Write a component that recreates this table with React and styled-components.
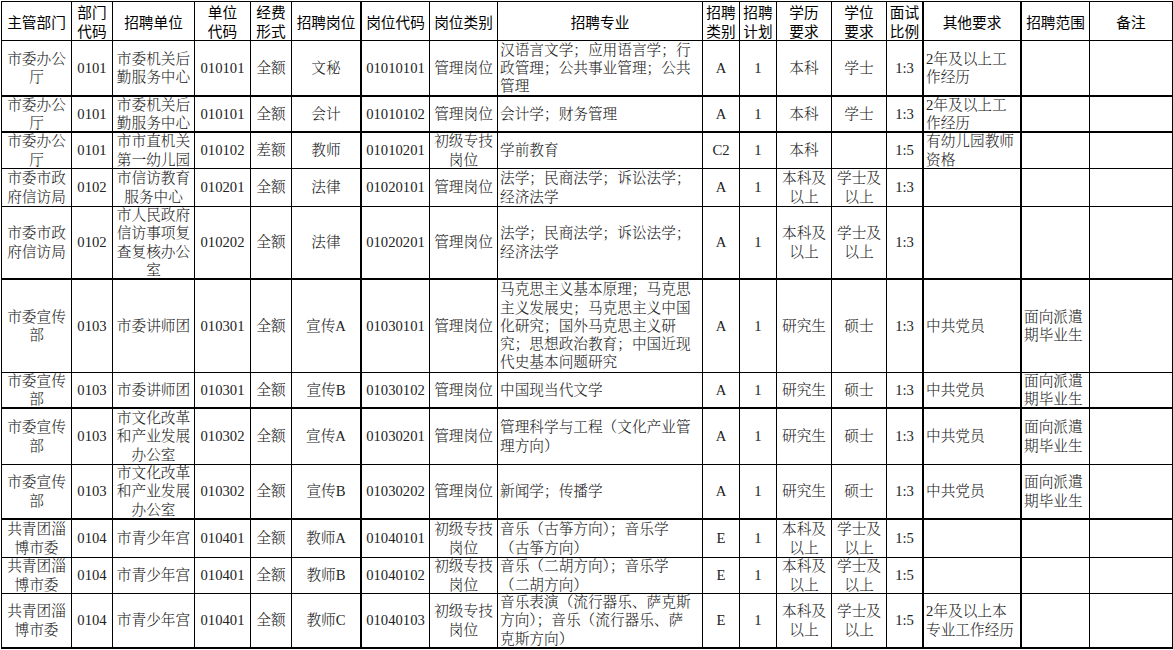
import styled, { createGlobalStyle } from 'styled-components'

const GlobalStyle = createGlobalStyle`
  html, body {
    margin: 0;
    padding: 0;
    background: #fff;
  }
`

// 列宽（线到线的像素距离），thick 表示右侧是粗线
const cols = [
  { w: 70 }, { w: 41 }, { w: 82 }, { w: 56 }, { w: 41 }, { w: 70, thick: true },
  { w: 68 }, { w: 68 }, { w: 205, left: true }, { w: 37 }, { w: 37 }, { w: 55 },
  { w: 55 }, { w: 37, thick: true }, { w: 98, left: true, thick: true }, { w: 68, left: true }, { w: 83 }
]

const headers = [
  '主管部门', '部门\n代码', '招聘单位', '单位\n代码', '经费\n形式', '招聘岗位', '岗位代码', '岗位类别',
  '招聘专业', '招聘\n类别', '招聘\n计划', '学历\n要求', '学位\n要求', '面试\n比例', '其他要求', '招聘范围', '备注'
]

const rows = [
  { h: 56, thick: true, cells: ['市委办公\n厅', '0101', '市委机关后\n勤服务中心', '010101', '全额', '文秘', '01010101', '管理岗位', '汉语言文学；应用语言学；行\n政管理；公共事业管理；公共\n管理', 'A', '1', '本科', '学士', '1:3', '2年及以上工\n作经历', '', ''] },
  { h: 36, thick: true, cells: ['市委办公\n厅', '0101', '市委机关后\n勤服务中心', '010101', '全额', '会计', '01010102', '管理岗位', '会计学；财务管理', 'A', '1', '本科', '学士', '1:3', '2年及以上工\n作经历', '', ''] },
  { h: 36, cells: ['市委办公\n厅', '0101', '市市直机关\n第一幼儿园', '010102', '差额', '教师', '01010201', '初级专技\n岗位', '学前教育', 'C2', '1', '本科', '', '1:5', '有幼儿园教师\n资格', '', ''] },
  { h: 38, cells: ['市委市政\n府信访局', '0102', '市信访教育\n服务中心', '010201', '全额', '法律', '01020101', '管理岗位', '法学；民商法学；诉讼法学；\n经济法学', 'A', '1', '本科及\n以上', '学士及\n以上', '1:3', '', '', ''] },
  { h: 73, thick: true, cells: ['市委市政\n府信访局', '0102', '市人民政府\n信访事项复\n查复核办公\n室', '010202', '全额', '法律', '01020201', '管理岗位', '法学；民商法学；诉讼法学；\n经济法学', 'A', '1', '本科及\n以上', '学士及\n以上', '1:3', '', '', ''] },
  { h: 93, cells: ['市委宣传\n部', '0103', '市委讲师团', '010301', '全额', '宣传A', '01030101', '管理岗位', '马克思主义基本原理；马克思\n主义发展史；马克思主义中国\n化研究；国外马克思主义研\n究；思想政治教育；中国近现\n代史基本问题研究', 'A', '1', '研究生', '硕士', '1:3', '中共党员', '面向派遣\n期毕业生', ''] },
  { h: 36, thick: true, cells: ['市委宣传\n部', '0103', '市委讲师团', '010301', '全额', '宣传B', '01030102', '管理岗位', '中国现当代文学', 'A', '1', '研究生', '硕士', '1:3', '中共党员', '面向派遣\n期毕业生', ''] },
  { h: 56, cells: ['市委宣传\n部', '0103', '市文化改革\n和产业发展\n办公室', '010302', '全额', '宣传A', '01030201', '管理岗位', '管理科学与工程（文化产业管\n理方向）', 'A', '1', '研究生', '硕士', '1:3', '中共党员', '面向派遣\n期毕业生', ''] },
  { h: 55, thick: true, cells: ['市委宣传\n部', '0103', '市文化改革\n和产业发展\n办公室', '010302', '全额', '宣传B', '01030202', '管理岗位', '新闻学；传播学', 'A', '1', '研究生', '硕士', '1:3', '中共党员', '面向派遣\n期毕业生', ''] },
  { h: 38, cells: ['共青团淄\n博市委', '0104', '市青少年宫', '010401', '全额', '教师A', '01040101', '初级专技\n岗位', '音乐（古筝方向）；音乐学\n（古筝方向）', 'E', '1', '本科及\n以上', '学士及\n以上', '1:5', '', '', ''] },
  { h: 36, cells: ['共青团淄\n博市委', '0104', '市青少年宫', '010401', '全额', '教师B', '01040102', '初级专技\n岗位', '音乐（二胡方向）；音乐学\n（二胡方向）', 'E', '1', '本科及\n以上', '学士及\n以上', '1:5', '', '', ''] },
  { h: 55, thick: true, cells: ['共青团淄\n博市委', '0104', '市青少年宫', '010401', '全额', '教师C', '01040103', '初级专技\n岗位', '音乐表演（流行器乐、萨克斯\n方向）；音乐（流行器乐、萨\n克斯方向）', 'E', '1', '本科及\n以上', '学士及\n以上', '1:5', '2年及以上本\n专业工作经历', '', ''] }
]

const App = () => {
  const columns = cols.map(c => c.w + 'px').join(' ')
  const heights = [39, ...rows.map(r => r.h)].map(h => h + 'px').join(' ')

  return (
    <>
      <GlobalStyle />
      <Sheet $columns={columns} $rows={heights}>
        {headers.map((text, i) => (
          <HeadCell key={'h' + i} $thickRight={cols[i].thick}>{text}</HeadCell>
        ))}
        {rows.map((row, r) =>
          row.cells.map((text, i) => (
            <Cell
              key={r + '-' + i}
              $left={cols[i].left}
              $thickRight={cols[i].thick}
              $thickBottom={row.thick}
            >
              {text}
            </Cell>
          ))
        )}
      </Sheet>
    </>
  )
}

export default App

const Sheet = styled.div`
  display: grid;
  grid-template-columns: ${p => p.$columns};
  grid-template-rows: ${p => p.$rows};
  width: max-content;
  margin: 1px 0 0 1px;
  border-top: 1px solid #000;
  border-left: 1px solid #000;
`

const BaseCell = styled.div`
  box-sizing: border-box;
  display: flex;
  align-items: center;
  overflow: hidden;
  white-space: pre;
  font-size: 14.67px;
  line-height: 18.3px;
  border-right: ${p => (p.$thickRight ? 2 : 1)}px solid #000;
`

const HeadCell = styled(BaseCell)`
  justify-content: center;
  text-align: center;
  line-height: 19px;
  color: #000;
  font-family: "Noto Sans CJK SC", sans-serif;
  font-weight: 400;
  border-bottom: 1px solid #000;
`

const Cell = styled(BaseCell)`
  justify-content: ${p => (p.$left ? 'flex-start' : 'center')};
  text-align: ${p => (p.$left ? 'left' : 'center')};
  padding: ${p => (p.$left ? '0 1px 0 2px' : '0')};
  color: #222;
  font-family: "Liberation Serif", "Noto Serif CJK SC", "Noto Sans CJK SC", serif;
  font-weight: 300;
  border-bottom: ${p => (p.$thickBottom ? 2 : 1)}px solid #000;
`
